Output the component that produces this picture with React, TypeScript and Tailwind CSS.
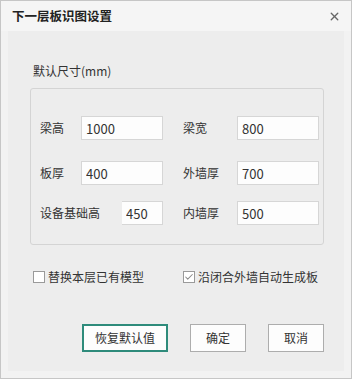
import { Check, X } from "lucide-react";

const font = { fontFamily: '"Noto Sans CJK SC", "Noto Sans", sans-serif' };

function Field({ label, value, labelW, inputW, noLeft }: { label: string; value: string; labelW: number; inputW: number; noLeft?: boolean }) {
  return (
    <div className="flex items-center">
      <span className="text-[12px] leading-none text-[#333]" style={{ width: labelW }}>
        {label}
      </span>
      <input
        readOnly
        value={value}
        style={{ width: inputW }}
        className={
          "h-[24px] border border-[#d6d6d6] bg-[#fdfdfd] px-[4px] text-[13px] text-[#333] outline-none " +
          (noLeft ? "border-l-0 px-[3px]" : "")
        }
      />
    </div>
  );
}

function Box({ checked }: { checked?: boolean }) {
  return (
    <span className="flex h-[12px] w-[12px] items-center justify-center border border-[#9a9a9a] bg-white">
      {checked && <Check size={10} strokeWidth={2.5} className="text-[#8a8a8a]" />}
    </span>
  );
}

export default function App() {
  return (
    <div style={font} className="flex h-[379px] w-[352px] flex-col border border-[#c6c6c6] bg-[#f2f2f2]">
      <div className="flex h-[30px] shrink-0 items-center justify-between bg-[#f5f5f5] pl-[11px] pr-[10px]">
        <span className="text-[12.5px] font-bold text-[#222]">下一层板识图设置</span>
        <X size={13} strokeWidth={2.5} className="text-[#666]" />
      </div>
      <div className="mx-[7px] mb-[7px] flex-1 bg-[#ededed] pt-[32px]">
        <div className="ml-[25px] text-[12px] leading-[16px] text-[#333]">默认尺寸(mm)</div>
        <div className="ml-[22px] mt-[9px] h-[157px] w-[294px] rounded-[3px] border border-[#d4d4d4] pl-[9px] pt-[27px]">
          <div className="flex gap-[20px]">
            <Field label="梁高" value="1000" labelW={41} inputW={82} />
            <Field label="梁宽" value="800" labelW={54} inputW={82} />
          </div>
          <div className="mt-[21px] flex gap-[20px]">
            <Field label="板厚" value="400" labelW={41} inputW={82} />
            <Field label="外墙厚" value="700" labelW={54} inputW={82} />
          </div>
          <div className="mt-[16px] flex gap-[20px]">
            <Field label="设备基础高" value="450" labelW={82} inputW={41} noLeft />
            <Field label="内墙厚" value="500" labelW={54} inputW={82} />
          </div>
        </div>
        <div className="mt-[23px] flex items-center text-[12px] text-[#333]">
          <div className="ml-[25px] flex w-[150px] items-center gap-[3px]">
            <Box />
            <span>替换本层已有模型</span>
          </div>
          <div className="flex items-center gap-[3px]">
            <Box checked />
            <span>沿闭合外墙自动生成板</span>
          </div>
        </div>
        <div className="ml-[74px] mt-[38px] flex gap-[22px] text-[12px] text-[#333]">
          <button className="h-[28px] w-[86px] border-2 border-[#2e8b7b] bg-[#fdfdfd]">恢复默认值</button>
          <button className="h-[28px] w-[56px] border border-[#adadad] bg-[#fdfdfd]">确定</button>
          <button className="h-[28px] w-[56px] border border-[#adadad] bg-[#fdfdfd]">取消</button>
        </div>
      </div>
    </div>
  );
}
